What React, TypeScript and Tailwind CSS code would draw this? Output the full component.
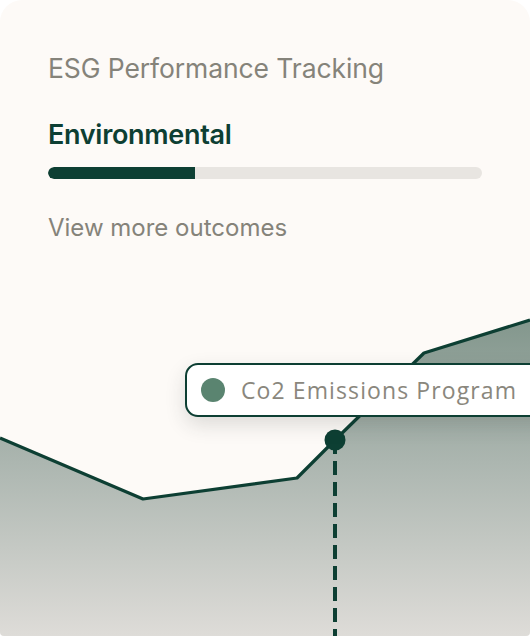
import React from 'react';

const LINE = '0,138 143,199 297,178 335,140 424,53 530,20';

export default function App() {
  return (
    <div className="w-[530px] h-[636px] bg-white">
      <div className="relative w-full h-full overflow-hidden bg-[#fdfaf7] rounded-t-[22px] rounded-b-[4px] flex flex-col font-['Inter',sans-serif]">
        {/* Header block */}
        <div className="px-12 pt-[51px] flex flex-col">
          <h1 className="text-[26.5px] leading-[34px] text-[#85837a] font-normal tracking-[-0.1px]">
            ESG Performance Tracking
          </h1>
          <h2 className="mt-[34px] text-[27px] leading-[32px] font-semibold text-[#0d3f33] tracking-[-0.3px]">
            Environmental
          </h2>
          <div className="mt-[16px] h-3 w-[434px] rounded-full bg-[#e8e5e1] overflow-hidden">
            <div className="h-full w-[147px] bg-[#0d3f33] rounded-l-full" />
          </div>
          <a className="mt-[34px] text-[24px] leading-[30px] text-[#85837a]">View more outcomes</a>
        </div>

        {/* Chart */}
        <div className="relative mt-auto h-[336px] w-full">
          <svg width="530" height="336" viewBox="0 0 530 336" className="block">
            <defs>
              <linearGradient id="area" x1="0" y1="20" x2="0" y2="336" gradientUnits="userSpaceOnUse">
                <stop offset="0" stopColor="#83978d" />
                <stop offset="0.45" stopColor="#acb6b0" />
                <stop offset="1" stopColor="#dedcd8" />
              </linearGradient>
            </defs>
            <polygon points={`${LINE} 530,336 0,336`} fill="url(#area)" />
            <polyline points={LINE} fill="none" stroke="#0d3f33" strokeWidth="3.2" strokeLinejoin="round" />
            <line x1="335" y1="140" x2="335" y2="336" stroke="#0d3f33" strokeWidth="4" strokeDasharray="14 7" />
            <circle cx="335" cy="140" r="10.5" fill="#0d3f33" />
          </svg>

          {/* Tooltip */}
          <div className="absolute left-[185px] top-[63px] h-[54px] w-[380px] flex items-center gap-[16px] pl-[14px] bg-white border-2 border-[#0d3f33] rounded-[13px] shadow-[0_8px_20px_rgba(40,50,45,0.15)]">
            <span className="w-6 h-6 rounded-full bg-[#5a8470] shrink-0" />
            <span className="text-[23px] leading-none text-[#8a877d] font-['Open_Sans',sans-serif] tracking-[1.1px]">
              Co2 Emissions Program
            </span>
          </div>
        </div>
      </div>
    </div>
  );
}
